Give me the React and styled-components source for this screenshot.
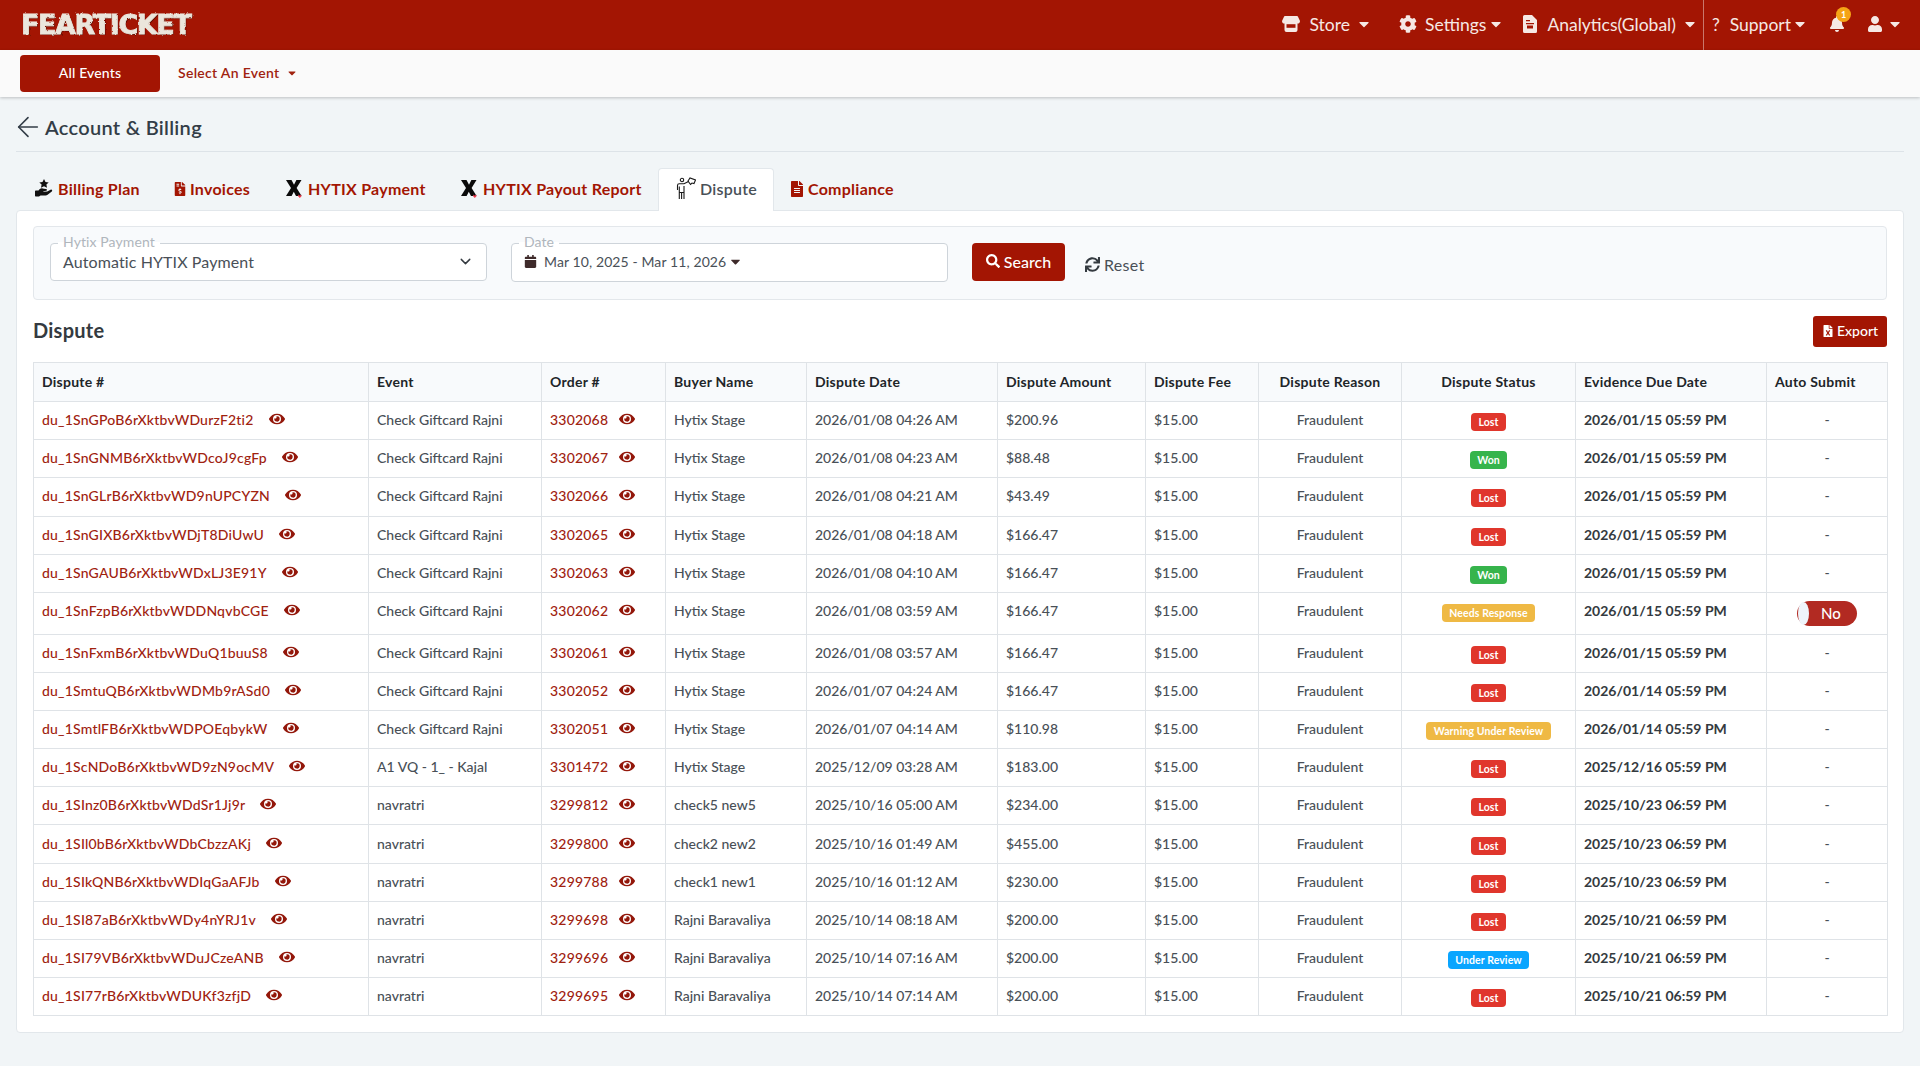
import React from "react";
import styled, { createGlobalStyle } from "styled-components";
import { FaCog, FaBell, FaUser, FaSearch, FaSync, FaEye, FaFileInvoiceDollar, FaFileAlt, FaCalendar, FaFileExcel, FaCaretDown } from "react-icons/fa";
import { ArrowLeft, ChevronDown } from "lucide-react";

const RED = "#a31503";
const FONT = `"Lato", "Noto Sans", "Liberation Sans", sans-serif`;

const Global = createGlobalStyle`
  html, body { margin: 0; padding: 0; background: #f1f5f7; font-family: ${FONT}; }
  * { box-sizing: border-box; }
`;

const Page = styled.div`
  min-height: 1066px;
  height: 1066px;
  overflow: hidden;
  background: #f1f5f7;
  color: #495057;
`;

const Header = styled.header`
  height: 50px;
  background: ${RED};
  display: flex;
  align-items: center;
  padding: 0 17px 0 21px;
  color: #f6e8e4;
`;

const Logo = styled.div`
  font-family: "DejaVu Sans", sans-serif;
  font-weight: 900;
  font-size: 27px;
  line-height: 28px;
  letter-spacing: -1.4px;
  color: #ebe6dc;
  -webkit-text-stroke: 0.8px #ebe6dc;
  text-shadow: 1px 1px 0 #5c0d02;
  filter: url(#grunge);
  margin-right: auto;
`;

const HiddenSvg = styled.svg`
  position: absolute;
  width: 0;
  height: 0;
`;

const NavItem = styled.div`
  display: flex;
  align-items: center;
  height: 100%;
  padding-bottom: 2px;
  font-size: 17.5px;
  margin-left: ${(p) => p.$ml || 0}px;
  gap: ${(p) => p.$gap || 9}px;
  white-space: nowrap;
`;

const Caret = styled(FaCaretDown)`
  font-size: 16px;
  margin-left: ${(p) => p.$ml || 0}px;
  flex: none;
`;

const Divider = styled.div`
  width: 1px;
  height: 50px;
  background: #c9776b;
  margin: 0 8px 0 5px;
`;

const BellWrap = styled.div`
  position: relative;
  margin-left: 21px;
  display: flex;
  align-items: center;
  font-size: 16px;
  padding-bottom: 2px;
`;

const BellBadge = styled.span`
  position: absolute;
  left: 7px;
  top: -9px;
  width: 15px;
  height: 15px;
  border-radius: 50%;
  background: #f5a316;
  color: #fff;
  font-size: 9px;
  font-weight: 700;
  display: flex;
  align-items: center;
  justify-content: center;
`;

const SubNav = styled.div`
  height: 47px;
  background: #fafafa;
  box-shadow: 0 1px 3px rgba(0, 0, 0, 0.22);
  display: flex;
  align-items: center;
  padding-left: 20px;
  position: relative;
`;

const AllEvents = styled.button`
  width: 140px;
  height: 37px;
  border: 0;
  border-radius: 4px;
  background: ${RED};
  color: #fff;
  font: 500 14px ${FONT};
  letter-spacing: 0.15px;
  padding-bottom: 3px;
`;

const EventSelect = styled.div`
  margin-left: 18px;
  display: flex;
  align-items: center;
  gap: 7px;
  color: #a0220f;
  font-size: 14px;
  font-weight: 600;
  letter-spacing: 0.3px;
  padding-bottom: 2px;
`;

const Content = styled.main`
  padding: 0 16px;
`;

const TitleRow = styled.div`
  height: 55px;
  display: flex;
  align-items: center;
  gap: 1px;
  border-bottom: 1px solid #dde3e8;
  padding: 5px 0 0 0;
`;

const BackArrow = styled(ArrowLeft)`
  margin-left: -4px;
`;

const Title = styled.h1`
  margin: 0;
  font-size: 20px;
  font-weight: 600;
  letter-spacing: 0.3px;
  color: #333d47;
`;

const Tabs = styled.nav`
  margin-top: 16px;
  height: 42px;
  display: flex;
  align-items: stretch;
  padding-left: 1px;
`;

const Tab = styled.div`
  display: flex;
  align-items: center;
  gap: ${(p) => p.$gap || 5}px;
  padding: 0 0 3px ${(p) => p.$pl || 17}px;
  font-size: 16px;
  letter-spacing: 0.25px;
  white-space: nowrap;
  color: ${(p) => (p.$active ? "#495057" : RED)};
  background: ${(p) => (p.$active ? "#fff" : "transparent")};
  border: 1px solid ${(p) => (p.$active ? "#e2e7eb" : "transparent")};
  border-bottom: 0;
  border-radius: 4px 4px 0 0;
  margin-bottom: -1px;
  position: relative;
  z-index: 1;
  width: ${(p) => p.$w}px;
  flex: none;
  font-weight: ${(p) => (p.$active ? 600 : 700)};
`;

const TabIcon = styled.span`
  display: inline-flex;
  color: ${(p) => p.$color || "inherit"};
  font-size: ${(p) => p.$size || 14}px;
`;

const Card = styled.section`
  height: 823px;
  background: #fff;
  border: 1px solid #e2e7eb;
  border-radius: 4px;
  padding: 15px 16px;
`;

const Filters = styled.div`
  height: 74px;
  background: #f8fafc;
  border: 1px solid #e3e7eb;
  border-radius: 4px;
  padding: 16px 0 0 16px;
  display: flex;
  align-items: flex-start;
`;

const Field = styled.div`
  position: relative;
  width: ${(p) => p.$w}px;
  height: ${(p) => p.$h}px;
  margin-right: ${(p) => p.$mr}px;
  background: #fff;
  border: 1px solid #ced4da;
  border-radius: 4px;
  display: flex;
  align-items: center;
  padding: 0 12px 2px;
  color: #495057;
  gap: 7px;
  letter-spacing: 0.1px;
  font-size: ${(p) => p.$fs}px;
`;

const FieldLabel = styled.span`
  position: absolute;
  left: 7px;
  top: -10px;
  padding: 0 5px;
  background: linear-gradient(#f8fafc 50%, #fff 50%);
  font-size: 14px;
  line-height: 16px;
  color: #b0b6bc;
`;

const Chevron = styled(ChevronDown)`
  margin-left: auto;
  margin-right: 0;
  color: #343a40;
`;

const DateIcon = styled(FaCalendar)`
  color: #3e2a2a;
  font-size: 13px;
`;

const DateCaret = styled(FaCaretDown)`
  color: #3e2a2a;
  margin-left: -5px;
  font-size: 15px;
`;

const SearchBtn = styled.button`
  width: 93px;
  height: 38px;
  border: 0;
  border-radius: 4px;
  background: ${RED};
  color: #fff;
  font: 500 16px ${FONT};
  display: flex;
  align-items: center;
  justify-content: center;
  gap: 4px;
  padding-bottom: 3px;
`;

const ResetBtn = styled.div`
  margin: 6px 0 0 20px;
  height: 30px;
  display: flex;
  align-items: center;
  gap: 4px;
  font-size: 16px;
  letter-spacing: 0.3px;
  color: #495057;
`;

const ResetIcon = styled(FaSync)`
  color: #343a40;
  font-size: 15px;
`;

const SectionHead = styled.div`
  height: 62px;
  display: flex;
  align-items: center;
  justify-content: space-between;
`;

const SectionTitle = styled.h2`
  margin: 0 0 3px;
  font-size: 20px;
  font-weight: 700;
  letter-spacing: 0.25px;
  color: #343a40;
`;

const ExportBtn = styled.button`
  width: 74px;
  height: 31px;
  border: 0;
  border-radius: 3px;
  background: ${RED};
  color: #fff;
  font: 500 14px ${FONT};
  display: flex;
  align-items: center;
  justify-content: center;
  gap: 3px;
  padding-bottom: 2px;
`;

const Table = styled.table`
  width: 1854px;
  table-layout: fixed;
  border-collapse: collapse;
  font-size: 14px;
`;

const Th = styled.th`
  height: 39px;
  padding: 0 8px 2px;
  background: #f8fafc;
  border: 1px solid #dfe3e7;
  color: #212529;
  font-weight: 700;
  letter-spacing: 0.25px;
  text-align: ${(p) => (p.$center ? "center" : "left")};
  white-space: nowrap;
`;

const Td = styled.td`
  height: ${(p) => (p.$tall ? 41.6 : 38.2)}px;
  padding: 0 8px ${(p) => (p.$tall ? 5 : 2)}px;
  border: 1px solid #dfe3e7;
  color: ${(p) => (p.$strong ? "#343a40" : "#495057")};
  font-weight: ${(p) => (p.$strong ? 700 : 500)};
  text-align: ${(p) => (p.$center ? "center" : "left")};
  white-space: nowrap;
`;

const ToggleCell = styled(Td)`
  padding: 0 8px 2px;
`;

const LinkText = styled.span`
  color: #a0220f;
  letter-spacing: 0.2px;
`;

const EyeIcon = styled(FaEye)`
  color: #93170a;
  font-size: 16px;
  margin-left: ${(p) => p.$ml || 15}px;
  vertical-align: -2px;
`;

const Badge = styled.span`
  display: inline-block;
  position: relative;
  top: 2px;
  padding: 3px 7.5px;
  border-radius: 4px;
  font-size: 10.5px;
  line-height: 12px;
  letter-spacing: 0.1px;
  font-weight: 700;
  color: #fff;
  background: ${(p) => p.$bg};
`;

const Toggle = styled.div`
  width: 60px;
  height: 25px;
  margin: 2px auto 0;
  border-radius: 13px;
  background: #b22a22;
  color: #fff;
  font-size: 15px;
  display: flex;
  align-items: center;
  justify-content: center;
  position: relative;
  padding-left: 8px;
`;

const ToggleKnob = styled.span`
  position: absolute;
  left: 1px;
  top: 1px;
  width: 11px;
  height: 23px;
  border-radius: 50%;
  background: #eff5fb;
`;

const StoreIcon = () => (
  <svg width="18" height="18" viewBox="0 0 18 18" fill="currentColor">
    <path d="M3 1h12a1 1 0 0 1 1 .7l2 4.3c0 1.6-1 2.6-2.5 2.6V15a2 2 0 0 1-2 2h-9a2 2 0 0 1-2-2V8.6C1 8.6 0 7.6 0 6l2-4.3A1 1 0 0 1 3 1z" />
    <path d="M4.5 9.2h9v3.6h-9z" fill={RED} />
  </svg>
);

const DocIcon = () => (
  <svg width="14" height="18" viewBox="0 0 14 18" fill="currentColor">
    <path d="M1.5 0H9l5 5v11.5a1.5 1.5 0 0 1-1.5 1.5h-11A1.5 1.5 0 0 1 0 16.500v-15A1.5 1.5 0 0 1 1.5 0z" />
    <path d="M3 5h4v1.2H3zM3 8h8v1.2H3zM4 10.5h6v3H4z" fill={RED} />
  </svg>
);

const HandStar = () => (
  <svg width="19" height="19" viewBox="0 0 19 19" fill="#111">
    <path d="M9 0l1.500 2.900 3.200.5-2.300 2.200.6 3.100L9 7.200 6 8.700l.6-3.100-2.300-2.200 3.200-.5z" />
    <path d="M4.500 10.200c1.400-1.200 3-1.200 4.400-.4l2.200.2c1 .1 1.200 1.500.2 1.800l-3 .4v.6l3.900-.2 3.400-1.900c1.200-.6 2.200.8 1.200 1.700l-4.200 3.300c-.6.5-1.300.7-2 .7H5.500l-1.500 1H1c-.6 0-1-.4-1-1v-4c0-.6.4-1 1-1h2.500z" />
  </svg>
);

const HytixX = () => (
  <svg width="16" height="18" viewBox="0 0 16 18">
    <path d="M0 0h5.500L8 4.800 10.400 0H15.500L10.600 8l5 8H10L7.800 11.700 5.600 16H0l5-8z" fill="#0a0a0a" />
    <path d="M12.500 14.500l1.300 1.300 1.300-1.300 .4 1.800-1.700 1.700-1.700-1.700z" fill="#ef3b4d" />
  </svg>
);

const DisputeFigure = () => (
  <svg width="20" height="23" viewBox="0 0 20 23" fill="none" stroke="#1a1a1a" strokeWidth="1.1">
    <circle cx="6" cy="3" r="1.700" />
    <path d="M1.500 13V8.500c0-1 .7-1.700 1.700-1.700h4.800l4.500-2.300" />
    <path d="M3.300 9.500V22M8 9V22M5.600 15.500V22M3.300 15.500H8" />
    <path d="M12 4l2-3 5.500 2-1.500 3.500-2-.5-1.500 1.500z" />
  </svg>
);

const rows = [
  ["du_1SnGPoB6rXktbvWDurzF2ti2", "Check Giftcard Rajni", "3302068", "Hytix Stage", "2026/01/08 04:26 AM", "$200.96", "Lost", "2026/01/15 05:59 PM"],
  ["du_1SnGNMB6rXktbvWDcoJ9cgFp", "Check Giftcard Rajni", "3302067", "Hytix Stage", "2026/01/08 04:23 AM", "$88.48", "Won", "2026/01/15 05:59 PM"],
  ["du_1SnGLrB6rXktbvWD9nUPCYZN", "Check Giftcard Rajni", "3302066", "Hytix Stage", "2026/01/08 04:21 AM", "$43.49", "Lost", "2026/01/15 05:59 PM"],
  ["du_1SnGIXB6rXktbvWDjT8DiUwU", "Check Giftcard Rajni", "3302065", "Hytix Stage", "2026/01/08 04:18 AM", "$166.47", "Lost", "2026/01/15 05:59 PM"],
  ["du_1SnGAUB6rXktbvWDxLJ3E91Y", "Check Giftcard Rajni", "3302063", "Hytix Stage", "2026/01/08 04:10 AM", "$166.47", "Won", "2026/01/15 05:59 PM"],
  ["du_1SnFzpB6rXktbvWDDNqvbCGE", "Check Giftcard Rajni", "3302062", "Hytix Stage", "2026/01/08 03:59 AM", "$166.47", "Needs Response", "2026/01/15 05:59 PM", true],
  ["du_1SnFxmB6rXktbvWDuQ1buuS8", "Check Giftcard Rajni", "3302061", "Hytix Stage", "2026/01/08 03:57 AM", "$166.47", "Lost", "2026/01/15 05:59 PM"],
  ["du_1SmtuQB6rXktbvWDMb9rASd0", "Check Giftcard Rajni", "3302052", "Hytix Stage", "2026/01/07 04:24 AM", "$166.47", "Lost", "2026/01/14 05:59 PM"],
  ["du_1SmtlFB6rXktbvWDPOEqbykW", "Check Giftcard Rajni", "3302051", "Hytix Stage", "2026/01/07 04:14 AM", "$110.98", "Warning Under Review", "2026/01/14 05:59 PM"],
  ["du_1ScNDoB6rXktbvWD9zN9ocMV", "A1 VQ - 1_ - Kajal", "3301472", "Hytix Stage", "2025/12/09 03:28 AM", "$183.00", "Lost", "2025/12/16 05:59 PM"],
  ["du_1SInz0B6rXktbvWDdSr1Jj9r", "navratri", "3299812", "check5 new5", "2025/10/16 05:00 AM", "$234.00", "Lost", "2025/10/23 06:59 PM"],
  ["du_1SIl0bB6rXktbvWDbCbzzAKj", "navratri", "3299800", "check2 new2", "2025/10/16 01:49 AM", "$455.00", "Lost", "2025/10/23 06:59 PM"],
  ["du_1SIkQNB6rXktbvWDIqGaAFJb", "navratri", "3299788", "check1 new1", "2025/10/16 01:12 AM", "$230.00", "Lost", "2025/10/23 06:59 PM"],
  ["du_1SI87aB6rXktbvWDy4nYRJ1v", "navratri", "3299698", "Rajni Baravaliya", "2025/10/14 08:18 AM", "$200.00", "Lost", "2025/10/21 06:59 PM"],
  ["du_1SI79VB6rXktbvWDuJCzeANB", "navratri", "3299696", "Rajni Baravaliya", "2025/10/14 07:16 AM", "$200.00", "Under Review", "2025/10/21 06:59 PM"],
  ["du_1SI77rB6rXktbvWDUKf3zfjD", "navratri", "3299695", "Rajni Baravaliya", "2025/10/14 07:14 AM", "$200.00", "Lost", "2025/10/21 06:59 PM"],
];

const badgeColors = {
  Lost: "#e0362c",
  Won: "#36b44c",
  "Needs Response": "#efb944",
  "Warning Under Review": "#efb944",
  "Under Review": "#0aa5ff",
};

const columns = [
  ["Dispute #", 335],
  ["Event", 173],
  ["Order #", 124],
  ["Buyer Name", 141],
  ["Dispute Date", 191],
  ["Dispute Amount", 148],
  ["Dispute Fee", 113],
  ["Dispute Reason", 143, true],
  ["Dispute Status", 174, true],
  ["Evidence Due Date", 191],
  ["Auto Submit", 121],
];

const Col = styled.col`
  width: ${(p) => p.$w}px;
`;

export default function App() {
  return (
    <Page>
      <Global />
      <HiddenSvg aria-hidden="true">
        <filter id="grunge">
          <feTurbulence type="fractalNoise" baseFrequency="0.35" numOctaves="2" seed="4" />
          <feDisplacementMap in="SourceGraphic" scale="2.4" />
        </filter>
      </HiddenSvg>
      <Header>
        <Logo>FEARTICKET</Logo>
        <NavItem $gap={10}><StoreIcon />Store<Caret $ml={-4} /></NavItem>
        <NavItem $ml={27} $gap={8}><FaCog size={18} />Settings<Caret $ml={-6} /></NavItem>
        <NavItem $ml={19} $gap={10}><DocIcon />Analytics(Global)<Caret $ml={-4} /></NavItem>
        <Divider />
        <NavItem $gap={10}>?{" "}<span>Support</span><Caret $ml={-9} /></NavItem>
        <BellWrap><FaBell /><BellBadge>1</BellBadge></BellWrap>
        <NavItem $ml={22} $gap={4}><FaUser size={16} /><Caret /></NavItem>
      </Header>
      <SubNav>
        <AllEvents>All Events</AllEvents>
        <EventSelect>Select An Event <FaCaretDown size={12} /></EventSelect>
      </SubNav>
      <Content>
        <TitleRow>
          <BackArrow size={32} strokeWidth={1.2} color="#333d47" />
          <Title>Account &amp; Billing</Title>
        </TitleRow>
        <Tabs>
          <Tab $w={138} $gap={4}><HandStar />Billing Plan</Tab>
          <Tab $w={113} $gap={3}><TabIcon $size={14}><FaFileInvoiceDollar /></TabIcon>Invoices</Tab>
          <Tab $w={175} $gap={6}><HytixX />HYTIX Payment</Tab>
          <Tab $w={215} $gap={6}><HytixX />HYTIX Payout Report</Tab>
          <Tab $w={116} $active $gap={4}><DisputeFigure />Dispute</Tab>
          <Tab $w={130} $gap={3} $pl={14}><TabIcon $size={16}><FaFileAlt /></TabIcon>Compliance</Tab>
        </Tabs>
        <Card>
          <Filters>
            <Field $w={437} $h={38} $mr={24} $fs={16}>
              <FieldLabel>Hytix Payment</FieldLabel>
              Automatic HYTIX Payment
              <Chevron size={17} />
            </Field>
            <Field $w={437} $h={39} $mr={24} $fs={14}>
              <FieldLabel>Date</FieldLabel>
              <DateIcon />
              Mar 10, 2025 - Mar 11, 2026
              <DateCaret />
            </Field>
            <SearchBtn><FaSearch size={14} />Search</SearchBtn>
            <ResetBtn><ResetIcon />Reset</ResetBtn>
          </Filters>
          <SectionHead>
            <SectionTitle>Dispute</SectionTitle>
            <ExportBtn><FaFileExcel size={12} />Export</ExportBtn>
          </SectionHead>
          <Table>
            <colgroup>
              {columns.map(([name, w]) => <Col key={name} $w={w} />)}
            </colgroup>
            <thead>
              <tr>
                {columns.map(([name, , center]) => <Th key={name} $center={center}>{name}</Th>)}
              </tr>
            </thead>
            <tbody>
              {rows.map((r) => (
                <tr key={r[0]}>
                  <Td $tall={r[8]}><LinkText>{r[0]}</LinkText><EyeIcon /></Td>
                  <Td $tall={r[8]}>{r[1]}</Td>
                  <Td $tall={r[8]}><LinkText>{r[2]}</LinkText><EyeIcon $ml={11} /></Td>
                  <Td $tall={r[8]}>{r[3]}</Td>
                  <Td $tall={r[8]}>{r[4]}</Td>
                  <Td $tall={r[8]}>{r[5]}</Td>
                  <Td $tall={r[8]}>$15.00</Td>
                  <Td $tall={r[8]} $center>Fraudulent</Td>
                  <Td $tall={r[8]} $center><Badge $bg={badgeColors[r[6]]}>{r[6]}</Badge></Td>
                  <Td $tall={r[8]} $strong>{r[7]}</Td>
                  {r[8] ? <ToggleCell $tall $center><Toggle><ToggleKnob />No</Toggle></ToggleCell> : <Td $center>-</Td>}
                </tr>
              ))}
            </tbody>
          </Table>
        </Card>
      </Content>
    </Page>
  );
}
